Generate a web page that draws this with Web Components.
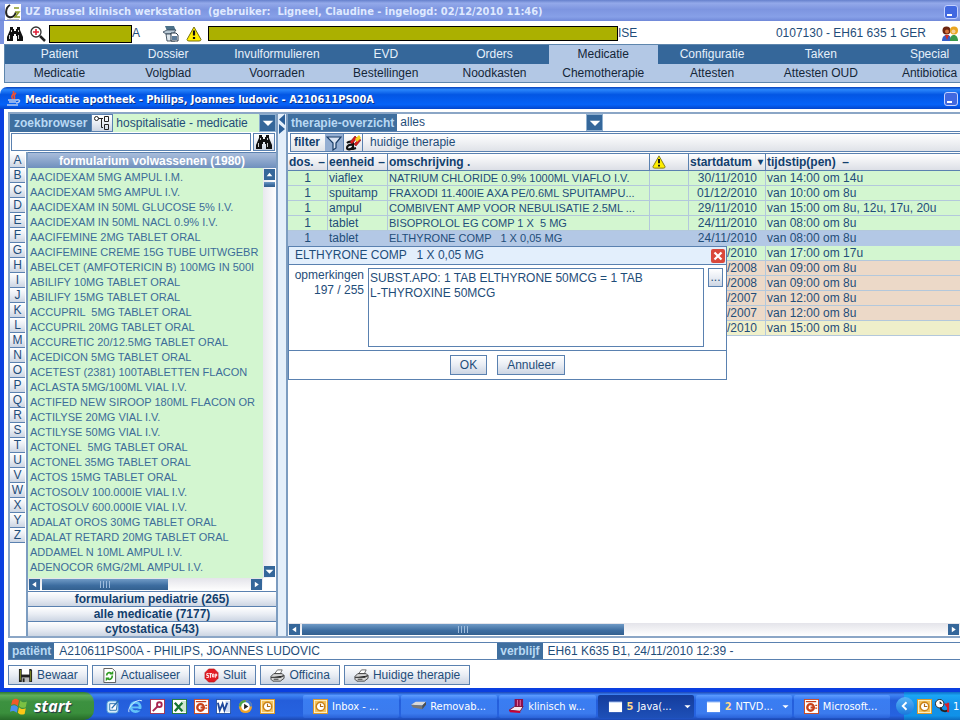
<!DOCTYPE html>
<html lang="nl">
<head>
<meta charset="UTF-8">
<meta name="viewport" content="width=device-width, initial-scale=1">
<title>UZ Brussel klinisch werkstation</title>
<style>
    html, body{
        margin:0;
        height:100%;
        overflow:hidden;
    }
    body{
        --ink:#1f4d79;
        --line:#5a81b0;
        --bar:#35679a;
        --pale:#b3c8e5;
        --green:#d3f6d0;
        --button:linear-gradient(#ffffff, #e9edf4 50%, #ccd5e3);
        display:flex;
        flex-direction:column;
        font:12px/15px "Liberation Sans", Arial, sans-serif;
        color:var(--ink);
        background:#fff;
    }
    klinisch-station{
        flex:1;
        min-height:0;
    }
</style>
</head>
<body>
    <klinisch-station></klinisch-station>
    <win-taskbar></win-taskbar>

<script>
// All drawings, on a 16 x 16 grid
const ICONS = {
    logo:`<path fill="#fff" d="M0 0h16v16H0z"/><path fill="none" stroke="#222" stroke-width="2" d="M5 1C0 4 0 12 4 13s6-2 7-5"/><path fill="none" stroke="#8a9a28" stroke-width="1.500" d="M9 4h5M10 8h4l-4 5h5"/><path stroke="#bbb" d="M2 15.500h12"/>`,
    binoculars:`<path fill="#111" d="M3 1h3v2h1v2h2V3h1V1h3v3l3 7v4h-6v-5H9v-2H7v2H6v5H0v-4l3-7z"/><path stroke="#fff" stroke-width=".8" d="M4.500 4v2M2.500 9v4M11.500 4v2M11.500 9v4"/>`,
    search:`<circle cx="6" cy="6" r="5" fill="#fff" stroke="#333" stroke-width="1.300"/><path stroke="#e0223a" stroke-width="1.600" d="M3 6h6M6 3v6"/><path stroke="#222" stroke-width="2.500" d="M10 10l5 5"/>`,
    files:`<path fill="#4c7189" d="M2 0h9l2 5H4z"/><path fill="#b9c9d4" stroke="#345" stroke-width=".8" d="M0 6l4-2h9l-3 4H3z"/><path fill="#dfe7ec" stroke="#234" stroke-width=".8" d="M3 8h9v7H4z"/><path fill="#fff" stroke="#123" stroke-width=".9" d="M8 7h5l2 2v6H8z"/><path stroke="#28527a" stroke-width="1.400" d="M9 11h5M9 13h5"/>`,
    warning:`<path fill="#ffee00" stroke="#77700a" stroke-linejoin="round" d="M8 1L15 13.500Q15 15 13 15H3Q1 15 1 13.500z"/><path stroke="#111" stroke-width="2.200" d="M8 4.500v5M8 11v2"/>`,
    users:`<circle cx="4.500" cy="4.500" r="4" fill="#6b2410"/><circle cx="5" cy="5.500" r="2" fill="#d5713c"/><path fill="#355fc8" d="M0 15c0-4 2-6 5-6s4 2 4 6z"/><circle cx="12" cy="4.500" r="4" fill="#e9a520"/><circle cx="11.500" cy="5.500" r="2" fill="#f4cf9a"/><path fill="#399a49" d="M8 15c0-5 2-6 4-6s4 2 4 6z"/><path fill="#d12b28" d="M3 9l2 5 2-5z"/>`,
    java:`<path fill="none" stroke="#f05030" stroke-width="1.600" d="M8 0c3 3-4 4 0 8M11 2c-4 3 0 4-2 6"/><path fill="none" stroke="#b8ccf0" stroke-width="1.500" d="M3 9h9M4 11h7M2 14h11M12 9c4-1 3 3-1 3"/>`,
    tree:`<path fill="none" stroke="#222" d="M4 3.500h5M7.500 3.500v9H9M10.500 1.500h4v5h-4zM10.500 9.500h4v5h-4z"/><circle cx="2.500" cy="3.500" r="2" fill="#fff" stroke="#222"/>`,
    filter:`<path fill="#d9e3f2" stroke="#173b66" stroke-width="1.200" d="M1 2h14L10 8v5l-3 2V8z"/>`,
    eraser:`<path fill="none" stroke="#111" stroke-width="2.200" d="M2 8c2-2 6-2 6 1v6M8 10c-4-1-6 1-6 3s4 2 6-1M8 14l3-1"/><path fill="#d91c1c" stroke="#7b1010" stroke-width=".6" d="M5 7l5-6 2 2-5 6z"/><path fill="#d91c1c" stroke="#7b1010" stroke-width=".6" d="M9 9l5-5 2 1-5 6z"/><path fill="#f4d21f" d="M10 4l4-4 2 3-4 4z"/>`,
    floppy:`<path fill="#222" d="M1 1h13l1 1v13H1z"/><path fill="#fff" d="M4 1h8v6H4z"/><path fill="#86921f" d="M2 2h1v11H2zM13 3h1v11h-1z"/><path fill="#bbb" d="M4 10h8v5H4z"/><path fill="#222" d="M5 11h2v4H5z"/>`,
    refresh:`<path fill="#fff" stroke="#555" d="M2 .5h9l3.500 3.500v11.500H2z"/><path fill="none" stroke="#2e9b20" stroke-width="1.800" d="M5 8c0-3 3-4 5-2M11 8c0 4-3 5-5 3"/><path fill="#2e9b20" d="M8 7h4V3zM8 10H4v4z"/>`,
    stop:`<path fill="#e31b23" stroke="#a90f16" stroke-width=".6" d="M5 1h6l4 4v6l-4 4H5l-4-4V5z"/><path fill="none" stroke="#fff" stroke-width="1" d="M5 6H3v2h2v2H2.500M5.500 6h3M7 6v4.500M9 6.500h1.500v3H9zM12 10.500V6.500h1.500v2H12"/>`,
    printer:`<path fill="#fff" stroke="#444" stroke-width=".8" d="M5 6l3-4h5l-2 4z"/><path fill="#d6d6d6" stroke="#333" stroke-width=".9" d="M1 9l3-3h9l2 2v3l-4 3H3l-2-2z"/><path stroke="#444" stroke-width="1.200" d="M1 10h10l4-2M4 12h5"/>`,
    flag:`<path fill="#f05a28" d="M2 3c2-2 4-2 6 0L7 8C5 6 3 6 1 7z"/><path fill="#7ac143" d="M9 3c2 2 4 2 6 1l-1 5c-2 1-4 1-6-1z"/><path fill="#4a90ee" d="M1 8c2-1 4-1 6 1l-1 5c-2-2-4-2-6-1z"/><path fill="#fbc716" d="M8 9c2 2 4 2 6 1l-1 5c-2 1-4 1-6-1z"/>`,
    desktop:`<rect x="1" y="2" width="12" height="13" rx="3" fill="#d6ecfb" stroke="#4b9bd4"/><path fill="#fff" stroke="#276fae" d="M4 5h8l-1 7H4z"/><path stroke="#276fae" stroke-width="1.500" d="M6 10l8-9"/>`,
    ie:`<circle cx="8" cy="8.500" r="5" fill="none" stroke="#63c3f8" stroke-width="3"/><path stroke="#63c3f8" stroke-width="2" d="M4 9h9"/><path stroke="#1d5fd8" stroke-width="1.500" d="M10 11.500h5"/><path fill="none" stroke="#d5efff" d="M1 14C-1 9 9-1 15 2"/>`,
    access:`<rect x=".5" y=".5" width="15" height="15" fill="#fff" stroke="#a33454"/><path fill="none" stroke="#a92550" stroke-width="2" d="M3 13l5-5"/><circle cx="10" cy="6" r="2.500" fill="none" stroke="#a92550" stroke-width="2"/>`,
    excel:`<rect x=".5" y=".5" width="15" height="15" fill="#fff" stroke="#267a38"/><path fill="#cfe8d0" d="M10 2h5v12h-5z"/><path stroke="#187532" stroke-width="2.500" d="M3 4l8 9M11 4l-8 9"/>`,
    powerpoint:`<rect x=".5" y=".5" width="15" height="15" fill="#fff" stroke="#cc4a22"/><circle cx="7" cy="9" r="3.500" fill="none" stroke="#c8411a" stroke-width="2.500"/><path fill="#c8411a" d="M2 2h11v1.500H2zM7 8h3v2H7zM12 6h2v1.500h-2zM12 9h2v1.500h-2z"/>`,
    word:`<rect x=".5" y=".5" width="15" height="15" fill="#fff" stroke="#2b55a4"/><path fill="#cfdcf4" d="M10 2h5v12h-5z"/><path fill="none" stroke="#1e479b" stroke-width="2" d="M2 4l2 8 3-7 2 7 3-8"/>`,
    media:`<circle cx="8" cy="8" r="7" fill="#f0a42a"/><path fill="#3d79d8" d="M8 8V1a7 7 0 0 1 7 7z"/><path fill="#4ba546" d="M8 8H1a7 7 0 0 1 7-7z"/><circle cx="8" cy="8" r="4.500" fill="#fff"/><path fill="#222" d="M6.500 5v6L11 8z"/>`,
    outlook:`<rect x=".5" y=".5" width="15" height="15" fill="#fff3cf" stroke="#e09a22"/><rect x="2" y="2" width="12" height="12" fill="#f5c45c"/><circle cx="8" cy="8" r="4.500" fill="#fff" stroke="#c9821a" stroke-width="1.500"/><path fill="none" stroke="#b06a10" stroke-width="1.200" d="M8 5v3h3"/>`,
    drive:`<path fill="#d9d9d9" d="M0 6l5-3h11l-4 4z"/><path fill="#777" d="M0 6l12 1v4L2 9z"/><path fill="#4e4e4e" d="M12 7l4-4v3l-4 5z"/>`,
    klinisch:`<path fill="#8d0f4b" d="M6 0h9v9H6z"/><path stroke="#e67aa8" d="M9 1v8M12 1v8"/><path fill="#f8e9ee" stroke="#7d1236" d="M0 12l6-4h9l-3 5z"/><path fill="#c03" d="M0 12l12 1v2L1 14z"/>`,
    window:`<path fill="#fff" d="M1 3h14v11H1z"/><path fill="#bcd4fa" d="M1 3h14v1H1z"/>`,
    tray:`<circle cx="5" cy="5" r="4.500" fill="#fff" stroke="#222"/><path fill="#111" d="M5 2l3 3H5z"/><path fill="none" stroke="#222" stroke-width="2" d="M6 9c0 4 5 5 8 3"/><path stroke="#d81f2a" stroke-width="2.200" d="M14 4v10M11 5l3 4"/>`,
    cross:`<path stroke="#fff" stroke-width="2.500" d="M4 4l8 8M12 4l-8 8"/>`,
    up:`<path fill="#fff" d="M3 11h10L8 5z"/>`,
    down:`<path fill="#fff" d="M1 5h14L8 12z"/>`,
    left:`<path fill="#fff" d="M11 3v10L4 8z"/>`,
    right:`<path fill="#fff" d="M5 3v10l7-5z"/>`,
    chevron:`<path fill="none" stroke="#fff" stroke-width="2.500" d="M10 3L5 8l5 5"/>`
};

// Every element below only has to give its markup and its styles
class BaseElement extends HTMLElement{
    constructor(){
        super();
        this.attachShadow({mode:"open"});
    }
    getTemplate(){
        const template = document.createElement('template');
        template.innerHTML = `
            <style>
                *{ box-sizing:border-box; }
                :host{ white-space:normal; }
                button, input, select, textarea{
                    font:inherit;
                    color:inherit;
                    margin:0;
                    padding:0;
                    border:0;
                    border-radius:0;
                    background:none;
                    appearance:none;
                    outline:0;
                }
                a{ color:inherit; text-decoration:none; }
                ${this.getStyles()}
            </style>
            ${this.getMarkup()}
        `;
        return template;
    }
    connectedCallback(){
        if(this.shadowRoot.childNodes.length) return;
        this.shadowRoot.appendChild(this.getTemplate().content.cloneNode(true));
    }
}

class PixIcon extends BaseElement{
    getMarkup(){
        return `<svg viewBox="0 0 16 16" aria-hidden="true">${ICONS[this.getAttribute('name')]}</svg>`;
    }
    getStyles(){
        return `
            :host{ display:block; flex:none; width:16px; height:16px; }
            svg{ display:block; width:100%; height:100%; }
        `;
    }
}
customElements.define('pix-icon', PixIcon);

class TitleBar extends BaseElement{
    getMarkup(){
        return `
            <slot name="icon"></slot>
            <h1><slot></slot></h1>
            <button type="button" aria-label="Minimaliseren"></button>
        `;
    }
    getStyles(){
        return `
            :host{
                display:flex;
                align-items:center;
                gap:4px;
                height:21px;
                padding:2px 0 0 5px;
                color:#dfe9ff;
                background:linear-gradient(#6580cc, #93a9ea 15%, #7d95e0 45%, #87a0e8 80%, #7088d8);
            }
            :host([active]){
                height:22px;
                color:#fff;
                border-radius:7px 0 0 0;
                background:linear-gradient(#0940b8, #2a86fb 12%, #0356e4 35%, #0562f8 80%, #0345cc);
                text-shadow:1px 1px #0a2f86;
            }
            h1{
                flex:1;
                margin:0;
                font:bold 11px/15px "DejaVu Sans Condensed", "DejaVu Sans", sans-serif;
                white-space:pre;
            }
            button{
                width:14px;
                height:14px;
                margin-right:2px;
                border:1px solid #c4d2ff;
                border-radius:3px;
                background:linear-gradient(#fff, #fff) 2px 8px / 5px 2px no-repeat, #4068e0;
            }
        `;
    }
}
customElements.define('title-bar', TitleBar);

class MainMenu extends BaseElement{
    getMarkup(){
        const top = ['Patient', 'Dossier', 'Invulformulieren', 'EVD', 'Orders', 'Medicatie', 'Configuratie', 'Taken', 'Special'];
        const sub = ['Medicatie', 'Volgblad', 'Voorraden', 'Bestellingen', 'Noodkasten', 'Chemotherapie', 'Attesten', 'Attesten OUD', 'Antibiotica'];
        return `
            <nav>
                ${top.map((t, i) => `<a href="#" class="top${i == 5 ? ' active' : ''}">${t}</a>`).join('')}
                ${sub.map(t => `<a href="#">${t}</a>`).join('')}
            </nav>
        `;
    }
    getStyles(){
        return `
            :host{
                display:block;
                overflow:hidden;
                border:1px solid #5e86ad;
                border-right:0;
                background:var(--pale);
            }
            /* the last column runs a little past the window */
            nav{
                display:grid;
                grid-template-columns:repeat(9, 1fr);
                margin-right:-24px;
                color:#142638;
                line-height:18px;
                text-align:center;
            }
            .top{ line-height:19px; color:#e6f0fa; background:var(--bar); }
            .active{ color:#142638; background:var(--pale); }
        `;
    }
}
customElements.define('main-menu', MainMenu);

// <scroll-bar size="64"> is horizontal, add "vertical" for the other way
class ScrollBar extends BaseElement{
    getMarkup(){
        const vertical = this.hasAttribute('vertical');
        return `
            <button type="button" aria-label="Terug"><pix-icon name="${vertical ? 'up' : 'left'}"></pix-icon></button>
            <div class="track"><div class="thumb"><i></i></div></div>
            <button type="button" aria-label="Verder"><pix-icon name="${vertical ? 'down' : 'right'}"></pix-icon></button>
        `;
    }
    getStyles(){
        const size = this.getAttribute('size') + '%';
        return `
            :host{
                display:flex;
                gap:2px;
                padding:1px;
                height:13px;
                background:linear-gradient(#e4e4ea, #fff);
            }
            :host([vertical]){
                flex-direction:column;
                width:13px;
                height:auto;
                background:linear-gradient(90deg, #e8e8ee, #fff);
            }
            button{
                display:grid;
                place-items:center;
                flex:none;
                width:11px;
                height:11px;
                background:var(--bar);
            }
            pix-icon{ width:9px; height:9px; }
            .track{ flex:1; display:flex; }
            .thumb{
                display:grid;
                place-items:center;
                width:${size};
                background:linear-gradient(#6f9ac6, #3c6c9f 60%, #33608f);
            }
            i{
                width:10px;
                height:7px;
                background:repeating-linear-gradient(90deg, #9dbbdc 0 1px, transparent 1px 3px);
            }
            :host([vertical]) .track{ flex-direction:column; }
            :host([vertical]) .thumb{ width:11px; height:5px; }
            :host([vertical]) i{ display:none; }
        `;
    }
}
customElements.define('scroll-bar', ScrollBar);

class PushButton extends BaseElement{
    getMarkup(){
        return `<button type="button"><slot name="icon"></slot><slot></slot></button>`;
    }
    getStyles(){
        return `
            :host{ display:block; }
            button{
                display:flex;
                align-items:center;
                gap:4px;
                height:20px;
                padding:0 9px;
                border:1px solid var(--line);
                background:var(--button);
            }
            ::slotted(pix-icon){ width:15px; height:15px; }
        `;
    }
}
customElements.define('push-button', PushButton);

class ZoekBrowser extends BaseElement{
    getMarkup(){
        const drugs = [
            'AACIDEXAM 5MG AMPUL I.M.',
            'AACIDEXAM 5MG AMPUL I.V.',
            'AACIDEXAM IN 50ML GLUCOSE 5% I.V.',
            'AACIDEXAM IN 50ML NACL 0.9% I.V.',
            'AACIFEMINE 2MG TABLET ORAL',
            'AACIFEMINE CREME 15G TUBE UITWGEBR',
            'ABELCET (AMFOTERICIN B) 100MG IN 500I',
            'ABILIFY 10MG TABLET ORAL',
            'ABILIFY 15MG TABLET ORAL',
            'ACCUPRIL  5MG TABLET ORAL',
            'ACCUPRIL 20MG TABLET ORAL',
            'ACCURETIC 20/12.5MG TABLET ORAL',
            'ACEDICON 5MG TABLET ORAL',
            'ACETEST (2381) 100TABLETTEN FLACON',
            'ACLASTA 5MG/100ML VIAL I.V.',
            'ACTIFED NEW SIROOP 180ML FLACON OR',
            'ACTILYSE 20MG VIAL I.V.',
            'ACTILYSE 50MG VIAL I.V.',
            'ACTONEL  5MG TABLET ORAL',
            'ACTONEL 35MG TABLET ORAL',
            'ACTOS 15MG TABLET ORAL',
            'ACTOSOLV 100.000IE VIAL I.V.',
            'ACTOSOLV 600.000IE VIAL I.V.',
            'ADALAT OROS 30MG TABLET ORAL',
            'ADALAT RETARD 20MG TABLET ORAL',
            'ADDAMEL N 10ML AMPUL I.V.',
            'ADENOCOR 6MG/2ML AMPUL I.V.'
        ];
        const letters = [...'ABCDEFGHIJKLMNOPQRSTUVWXYZ'];
        return `
            <div class="head">
                <label for="bron">zoekbrowser</label>
                <button type="button" class="tree" aria-label="Boomstructuur"><pix-icon name="tree"></pix-icon></button>
                <select id="bron"><option>hospitalisatie - medicatie</option></select>
                <span class="arrow"><pix-icon name="down"></pix-icon></span>
            </div>
            <form class="search">
                <input type="text" aria-label="Zoekterm">
                <button type="button" aria-label="Zoeken"><pix-icon name="binoculars"></pix-icon></button>
            </form>
            <div class="body">
                <div class="letters">${letters.map(l => `<button type="button">${l}</button>`).join('')}</div>
                <div class="accordion">
                    <button type="button" class="open">formularium volwassenen (1980)</button>
                    <div class="list">
                        <ul>${drugs.map(d => `<li>${d}</li>`).join('')}</ul>
                        <scroll-bar vertical size="1"></scroll-bar>
                    </div>
                    <scroll-bar class="horizontal" size="61"></scroll-bar>
                    <button type="button">formularium pediatrie (265)</button>
                    <button type="button">alle medicatie (7177)</button>
                    <button type="button">cytostatica (543)</button>
                </div>
            </div>
        `;
    }
    getStyles(){
        return `
            :host{
                display:flex;
                flex-direction:column;
                border-right:2px solid #7c9cc0;
            }
            .head{ display:flex; height:18px; }
            label{
                padding:0 4px;
                font-weight:bold;
                line-height:18px;
                color:#b9d9f4;
                background:#3f6f9f;
            }
            .tree{ padding:0 2px; border:1px solid var(--line); background:var(--button); }
            select{ flex:1; min-width:0; padding:0 3px; background:var(--green); }
            .arrow{
                display:grid;
                place-items:center;
                width:17px;
                border:1px solid #8fb0d0;
                background:var(--bar);
            }
            .arrow pix-icon{ width:12px; height:12px; }
            .search{
                display:flex;
                gap:2px;
                margin:0;
                padding:1px 1px 1px;
                height:20px;
            }
            input{ flex:1; min-width:0; border:1px solid var(--line); background:#fff; }
            .search button{ padding:0 2px; border:1px solid var(--line); background:var(--button); }
            .body{ flex:1; display:flex; min-height:0; }
            .letters{
                width:18px;
                padding:1px 1px 0 0;
                border-right:2px solid #7c9cc0;
            }
            .letters button{
                display:block;
                width:100%;
                height:15px;
                line-height:14px;
                border-bottom:1px solid var(--line);
                background:var(--button);
            }
            .accordion{
                flex:1;
                display:flex;
                flex-direction:column;
                min-width:0;
            }
            .accordion > button{
                flex:none;
                height:15px;
                font-weight:bold;
                line-height:14px;
                color:#123f6d;
                border-top:1px solid var(--line);
                background:var(--button);
            }
            .accordion > .open{
                height:16px;
                color:#fff;
                background:linear-gradient(#a9bddb, #6f90bd);
            }
            .list{ flex:1; display:flex; min-height:0; background:var(--green); }
            ul{
                flex:1;
                margin:0;
                padding:2px 0 0 2px;
                overflow:hidden;
                list-style:none;
                font-size:11px;
                white-space:pre;
                color:#3c6c99;
            }
            .horizontal{ flex:none; margin-right:13px; }
        `;
    }
}
customElements.define('zoek-browser', ZoekBrowser);

class OpmerkingenDialog extends BaseElement{
    getMarkup(){
        return `
            <div class="title">
                <span>ELTHYRONE COMP   1 X 0,05 MG</span>
                <button type="button" class="close" aria-label="Sluiten"><pix-icon name="cross"></pix-icon></button>
            </div>
            <div class="content">
                <label for="tekst">opmerkingen<br>197 / 255</label>
                <textarea id="tekst" spellcheck="false">SUBST.APO: 1 TAB ELTHYRONE 50MCG = 1 TAB
L-THYROXINE 50MCG</textarea>
                <button type="button" class="more">...</button>
            </div>
            <div class="actions">
                <push-button>OK</push-button>
                <push-button>Annuleer</push-button>
            </div>
        `;
    }
    getStyles(){
        return `
            :host{
                display:block;
                border:1px solid var(--line);
                background:#fff;
            }
            .title{
                display:flex;
                align-items:center;
                justify-content:space-between;
                height:18px;
                padding:0 1px 0 6px;
                white-space:pre;
                border-bottom:1px solid var(--line);
                background:#e3effc;
            }
            .close{
                width:14px;
                height:14px;
                border-radius:2px;
                background:#d9483b;
            }
            .close pix-icon{ width:14px; height:14px; }
            .content{
                display:flex;
                align-items:flex-start;
                gap:4px;
                padding:3px;
            }
            label{ width:72px; text-align:right; }
            textarea{
                flex:1;
                height:79px;
                padding:2px 1px;
                border:1px solid var(--line);
                resize:none;
                overflow:hidden;
            }
            .more{
                width:15px;
                height:19px;
                border:1px solid var(--line);
                background:var(--button);
            }
            .actions{
                display:flex;
                justify-content:center;
                gap:10px;
                padding:4px;
                border-top:1px solid var(--line);
            }
        `;
    }
}
customElements.define('opmerkingen-dialog', OpmerkingenDialog);

class TherapieOverzicht extends BaseElement{
    getMarkup(){
        // class, dos., eenheid, omschrijving, startdatum, tijdstip
        const rows = [
            ['', '1', 'viaflex', 'NATRIUM CHLORIDE 0.9% 1000ML VIAFLO I.V.', '30/11/2010', 'van 14:00 om 14u'],
            ['', '1', 'spuitamp', 'FRAXODI 11.400IE AXA PE/0.6ML SPUITAMPU...', '01/12/2010', 'van 10:00 om 8u'],
            ['', '1', 'ampul', 'COMBIVENT AMP VOOR NEBULISATIE 2.5ML ...', '29/11/2010', 'van 15:00 om 8u, 12u, 17u, 20u'],
            ['', '1', 'tablet', 'BISOPROLOL EG COMP 1 X  5 MG', '24/11/2010', 'van 08:00 om 8u'],
            ['selected', '1', 'tablet', 'ELTHYRONE COMP   1 X 0,05 MG', '24/11/2010', 'van 08:00 om 8u'],
            ['', '', '', '', '/2010', 'van 17:00 om 17u'],
            ['old', '', '', '', '/2008', 'van 09:00 om 8u'],
            ['old', '', '', '', '/2008', 'van 09:00 om 8u'],
            ['old', '', '', '', '/2007', 'van 12:00 om 8u'],
            ['old', '', '', '', '/2007', 'van 12:00 om 8u'],
            ['ended', '', '', '', '/2010', 'van 15:00 om 8u']
        ];
        return `
            <div class="head">
                <label for="keuze">therapie-overzicht</label>
                <select id="keuze"><option>alles</option></select>
                <span class="arrow"><pix-icon name="down"></pix-icon></span>
            </div>
            <div class="filter">
                <b>filter</b>
                <button type="button" class="on" aria-label="Filter"><pix-icon name="filter"></pix-icon></button>
                <button type="button" aria-label="Filter wissen"><pix-icon name="eraser"></pix-icon></button>
                <span>huidige therapie</span>
            </div>
            <div class="grid">
                <table>
                    <colgroup><col class="c1"><col class="c2"><col class="c3"><col class="c4"><col class="c5"><col></colgroup>
                    <thead>
                        <tr>
                            <th><div><span>dos.</span><span>–</span></div></th>
                            <th><div><span>eenheid</span><span>–</span></div></th>
                            <th>omschrijving .</th>
                            <th aria-label="Waarschuwing"><pix-icon name="warning"></pix-icon></th>
                            <th><div><span>startdatum</span><small>▾</small></div></th>
                            <th>tijdstip(pen)  –</th>
                        </tr>
                    </thead>
                    <tbody>
                        ${rows.map(r => `<tr class="${r[0]}"><td class="dose">${r[1]}</td><td>${r[2]}</td><td class="drug">${r[3]}</td><td></td><td class="date">${r[4]}</td><td>${r[5]}</td></tr>`).join('')}
                    </tbody>
                </table>
                <opmerkingen-dialog></opmerkingen-dialog>
            </div>
            <scroll-bar size="50"></scroll-bar>
        `;
    }
    getStyles(){
        return `
            :host{
                display:flex;
                flex-direction:column;
                min-width:0;
                overflow:hidden;
                border-left:2px solid #7c9cc0;
            }
            .head{
                display:flex;
                height:18px;
                border-bottom:1px solid var(--line);
            }
            label{
                padding:0 3px;
                font-weight:bold;
                line-height:18px;
                color:#b9d9f4;
                background:#3f6f9f;
            }
            select{ width:189px; padding:0 3px; }
            .arrow{
                display:grid;
                place-items:center;
                width:17px;
                border:1px solid #8fb0d0;
                background:var(--bar);
            }
            .arrow pix-icon{ width:12px; height:12px; }
            .filter{
                display:flex;
                align-items:center;
                height:19px;
                margin:1px 0 1px 2px;
                border:1px solid var(--line);
                border-right:0;
                background:linear-gradient(#fff, #dfe2e8);
            }
            .filter b{ padding:0 5px 0 3px; color:#123f6d; }
            .filter button{
                height:17px;
                padding:0 1px;
                border-right:1px solid var(--line);
            }
            .filter .on{ background:#94aed2; }
            .filter span{ padding-left:7px; }
            .grid{
                position:relative;
                flex:1;
                min-height:0;
            }
            table{
                width:100%;
                table-layout:fixed;
                border-collapse:separate;
                border-spacing:0;
                border-top:1px solid var(--line);
                white-space:pre;
            }
            .c1{ width:40px; }
            .c2{ width:60px; }
            .c3{ width:262px; }
            .c4{ width:39px; }
            .c5{ width:77px; }
            th, td{
                height:15px;
                padding:0 0 0 1px;
                overflow:hidden;
                text-align:left;
                line-height:14px;
                border-right:1px solid #b3c8dc;
                border-bottom:1px solid #b3c8dc;
            }
            th{
                height:17px;
                color:#123f6d;
                border-color:var(--line);
                background:linear-gradient(#fff, #dcdfe6);
            }
            th:last-child, td:last-child{ border-right:0; }
            th div{ display:flex; justify-content:space-between; padding-right:2px; }
            th small{ font-size:10px; }
            th pix-icon{ width:14px; height:14px; margin-left:1px; }
            tbody tr{ background:var(--green); }
            tbody .selected{ background:var(--pale); }
            .selected td{ border-color:var(--pale); }
            tbody .old{ background:#ecd9c8; }
            tbody .ended{ background:#efefca; }
            .dose{ padding:0; text-align:center; }
            .drug{ font-size:11px; }
            .date{ padding-right:8px; text-align:right; }
            /* floats over the rows under the selected one */
            opmerkingen-dialog{
                position:absolute;
                top:93px;
                left:0;
                width:439px;
            }
        `;
    }
}
customElements.define('therapie-overzicht', TherapieOverzicht);

class PatientFooter extends BaseElement{
    getMarkup(){
        return `
            <div class="fields">
                <label for="patient">patiënt</label>
                <input id="patient" type="text" readonly value="A210611PS00A - PHILIPS, JOANNES LUDOVIC">
                <label for="verblijf">verblijf</label>
                <input id="verblijf" type="text" readonly value="EH61 K635 B1, 24/11/2010 12:39 -">
            </div>
            <div class="actions">
                <push-button><pix-icon slot="icon" name="floppy"></pix-icon>Bewaar</push-button>
                <push-button><pix-icon slot="icon" name="refresh"></pix-icon>Actualiseer</push-button>
                <push-button><pix-icon slot="icon" name="stop"></pix-icon>Sluit</push-button>
                <push-button><pix-icon slot="icon" name="printer"></pix-icon>Officina</push-button>
                <push-button><pix-icon slot="icon" name="printer"></pix-icon>Huidige therapie</push-button>
            </div>
        `;
    }
    getStyles(){
        return `
            :host{ display:block; padding:4px 0 3px 4px; }
            .fields{
                display:flex;
                height:18px;
                border:1px solid var(--line);
                border-right:0;
            }
            label{
                padding:0 3px;
                font-weight:bold;
                line-height:16px;
                color:#b9d9f4;
                background:#3f6f9f;
            }
            input{ flex:16; min-width:0; padding:0 5px; }
            #patient{ flex:17; }
            .actions{ display:flex; gap:4px; padding-top:5px; }
        `;
    }
}
customElements.define('patient-footer', PatientFooter);

class KlinischStation extends BaseElement{
    getMarkup(){
        return `
            <title-bar><pix-icon slot="icon" name="logo"></pix-icon>UZ Brussel klinisch werkstation  (gebruiker:  Ligneel, Claudine - ingelogd: 02/12/2010 11:46)</title-bar>
            <div class="tools">
                <button type="button" aria-label="Zoeken"><pix-icon name="binoculars"></pix-icon></button>
                <button type="button" aria-label="Patient zoeken"><pix-icon name="search"></pix-icon></button>
                <span class="name"><i class="mask"></i>A</span>
                <button type="button" aria-label="Dossiers"><pix-icon name="files"></pix-icon></button>
                <button type="button" aria-label="Waarschuwing"><pix-icon name="warning"></pix-icon></button>
                <span class="details"><i class="mask"></i>ISE</span>
                <span class="code">0107130 - EH61 635 1 GER</span>
                <button type="button" aria-label="Gebruikers"><pix-icon name="users"></pix-icon></button>
            </div>
            <main-menu></main-menu>
            <section>
                <title-bar active><pix-icon slot="icon" name="java"></pix-icon>Medicatie apotheek - Philips, Joannes ludovic - A210611PS00A</title-bar>
                <div class="window">
                    <main>
                        <zoek-browser></zoek-browser>
                        <div class="splitter"><svg viewBox="0 0 8 20" aria-hidden="true"><path d="M7 0v11L1 5.500zM1 10v10l6-5z"/></svg></div>
                        <therapie-overzicht></therapie-overzicht>
                    </main>
                    <patient-footer></patient-footer>
                </div>
            </section>
        `;
    }
    getStyles(){
        return `
            :host{ display:flex; flex-direction:column; overflow:hidden; }
            .tools{
                display:flex;
                align-items:center;
                height:23px;
                padding:2px 2px 0 3px;
                border-left:4px solid #7b93e0;
            }
            .tools button{ margin-right:7px; }
            .tools button:last-child{ margin:0; }
            .name, .details{ display:flex; align-items:center; }
            .name{ width:114px; margin-left:-4px; }
            .details{ flex:1; margin-left:-1px; }
            .mask{ border:1px solid #000; background:#abb000; }
            .name .mask{ width:83px; height:18px; }
            .details .mask{ flex:0 1 410px; height:15px; }
            .code{ margin-right:16px; white-space:nowrap; }
            main-menu{ margin-left:4px; }
            section{
                flex:1;
                display:flex;
                flex-direction:column;
                min-height:0;
                margin-top:4px;
            }
            .window{
                flex:1;
                display:flex;
                flex-direction:column;
                min-height:0;
                padding-top:3px;
                border:solid #0a3fe0;
                border-width:0 0 4px 4px;
            }
            main{
                flex:1;
                display:grid;
                grid-template-columns:268px 8px 1fr;
                min-height:0;
                margin-left:4px;
                border:2px solid #8ba6c6;
                border-right:0;
            }
            .splitter{ background:#e4effa; }
            svg{ display:block; width:8px; height:20px; fill:#2c5f98; }
        `;
    }
}
customElements.define('klinisch-station', KlinischStation);

class TaskItem extends BaseElement{
    getMarkup(){
        const count = this.getAttribute('count');
        return `
            <button type="button">
                <pix-icon name="${this.getAttribute('icon')}"></pix-icon>
                ${count ? `<b>${count}</b>` : ''}
                <span><slot></slot></span>
                ${count ? `<pix-icon class="more" name="down"></pix-icon>` : ''}
            </button>
        `;
    }
    getStyles(){
        return `
            :host{ display:block; flex:1; min-width:0; }
            button{
                display:flex;
                align-items:center;
                gap:4px;
                width:100%;
                height:23px;
                padding:0 3px 0 10px;
                border-radius:2px;
                color:#fff;
                white-space:nowrap;
                background:linear-gradient(#5d9cff, #3a7df2 20%, #3b7bee 80%, #2a62d8);
            }
            :host([pressed]) button{ background:linear-gradient(#143c9c, #1e50b8); }
            pix-icon{ width:15px; height:15px; }
            b{ color:#ffd98a; }
            span{ flex:1; text-align:left; }
            .more{ width:7px; height:7px; }
        `;
    }
}
customElements.define('task-item', TaskItem);

class WinTaskbar extends BaseElement{
    getMarkup(){
        const quick = ['desktop', 'ie', 'access', 'excel', 'powerpoint', 'word', 'media', 'outlook'];
        return `
            <button type="button" class="start"><pix-icon name="flag"></pix-icon>start</button>
            <div class="quick">
                ${quick.map(q => `<button type="button" aria-label="${q}"><pix-icon name="${q}"></pix-icon></button>`).join('')}
            </div>
            <div class="tasks">
                <task-item icon="outlook">Inbox - ...</task-item>
                <task-item icon="drive">Removab...</task-item>
                <task-item icon="klinisch">klinisch w...</task-item>
                <task-item icon="window" count="5" pressed>Java(...</task-item>
                <task-item icon="window" count="2">NTVD...</task-item>
                <task-item icon="powerpoint">Microsoft...</task-item>
            </div>
            <div class="tray">
                <button type="button" class="hide" aria-label="Pictogrammen verbergen"><pix-icon name="chevron"></pix-icon></button>
                <pix-icon name="outlook"></pix-icon>
                <pix-icon name="tray"></pix-icon>
                <span>1</span>
            </div>
        `;
    }
    getStyles(){
        return `
            :host{
                display:flex;
                align-items:center;
                height:28px;
                font:11px/15px "DejaVu Sans Condensed", "DejaVu Sans", sans-serif;
                color:#fff;
                background:linear-gradient(#1c48b8, #3f85f5 10%, #245edb 30%, #2663e0 85%, #1c48b0);
            }
            .start{
                display:flex;
                align-items:center;
                gap:6px;
                width:94px;
                height:28px;
                padding-left:10px;
                border-radius:0 10px 10px 0;
                font:italic bold 16px/20px "Open Sans", "Noto Sans", sans-serif;
                text-shadow:1px 1px 1px #234;
                background:linear-gradient(#2f7a30, #5fae5c 12%, #3c9140 35%, #3a8f3c 75%, #266a28);
            }
            .start pix-icon{ width:18px; height:18px; }
            .quick{ display:flex; gap:7px; margin-left:12px; }
            .quick pix-icon{ width:15px; height:15px; }
            .tasks{ flex:1; display:flex; gap:2px; margin:0 14px 0 28px; min-width:0; }
            .tray{
                display:flex;
                align-items:center;
                gap:3px;
                height:28px;
                width:56px;
                background:linear-gradient(#0f6fc8, #1ba6f5 12%, #1290e8 50%, #1092e8 85%, #0c6cc0);
            }
            .tray pix-icon{ width:15px; height:15px; }
            .tray .hide{
                flex:none;
                margin-left:-8px;
                border-radius:50%;
                background:linear-gradient(#58b4f8, #1a78dc);
                padding:3px;
            }
            .tray .hide pix-icon{ width:12px; height:12px; }
        `;
    }
}
customElements.define('win-taskbar', WinTaskbar);
</script>
</body>
</html>
